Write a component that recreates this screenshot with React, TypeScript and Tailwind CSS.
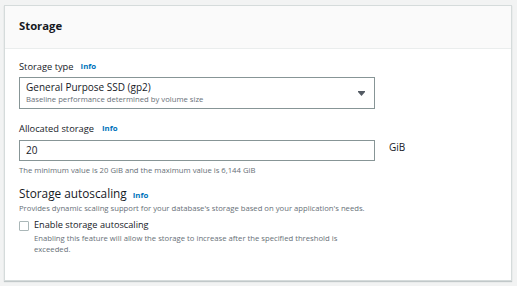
export default function App() {
  return (
    <div className="min-h-[286px] w-[517px] bg-[#f2f3f3] pt-[5px] px-[4px] font-['Open_Sans',sans-serif] text-[#16191f]">
      <div className="w-[508px] h-[276px] bg-white border border-[#d5dbdb] shadow-[0_1px_1px_rgba(0,28,36,0.2)]">
        <div className="h-[43px] bg-[#fafafa] border-b border-[#eaeded] px-[14px] pb-[2px] flex items-center">
          <h2 className="text-[11.3px] font-bold">Storage</h2>
        </div>
        <div className="px-[14px] pt-[10px]">
          <div className="flex items-center gap-[7px] h-[16px]">
            <span className="text-[9.3px]">Storage type</span>
            <span className="text-[7.8px] font-bold text-[#0073bb]">Info</span>
          </div>
          <div className="mt-[2px] w-[356px] h-[32px] border border-[#879596] flex items-center justify-between pl-[6px] pr-[9px]">
            <div className="flex flex-col leading-none">
              <span className="text-[10px]">General Purpose SSD (gp2)</span>
              <span className="text-[7.7px] text-[#687078] mt-[4px]">Baseline performance determined by volume size</span>
            </div>
            <svg width="7" height="5" viewBox="0 0 7 5">
              <path d="M0 0h7v1L3.5 5 0 1z" fill="#545b64" />
            </svg>
          </div>

          <div className="mt-[12px] flex items-center gap-[8px] h-[16px]">
            <span className="text-[9.3px]">Allocated storage</span>
            <span className="text-[7.8px] font-bold text-[#0073bb]">Info</span>
          </div>
          <div className="mt-[3px] flex items-start">
            <div className="w-[356px] h-[21px] border border-[#879596] flex items-center pl-[6px] text-[10px]">20</div>
            <span className="ml-[14px] text-[10px]">GiB</span>
          </div>
          <p className="mt-[4px] text-[7.7px] text-[#687078]">The minimum value is 20 GiB and the maximum value is 6,144 GiB</p>

          <div className="mt-[11px] flex items-end gap-[6px]">
            <span className="text-[11.8px] leading-none">Storage autoscaling</span>
            <span className="text-[7.8px] font-bold text-[#0073bb] leading-none">Info</span>
          </div>
          <p className="mt-[4px] text-[7.7px] text-[#687078]">Provides dynamic scaling support for your database's storage based on your application's needs.</p>
          <div className="mt-[3px] flex items-start gap-[5px]">
            <div className="mt-[3px] w-[10px] h-[10px] border border-[#aab7b8] rounded-[1px] bg-white shrink-0" />
            <div>
              <div className="text-[9.2px]">Enable storage autoscaling</div>
              <p className="mt-[1px] w-[318px] text-[7.7px] leading-[11px] text-[#687078]">Enabling this feature will allow the storage to increase after the specified threshold is exceeded.</p>
            </div>
          </div>
        </div>
      </div>
    </div>
  );
}
